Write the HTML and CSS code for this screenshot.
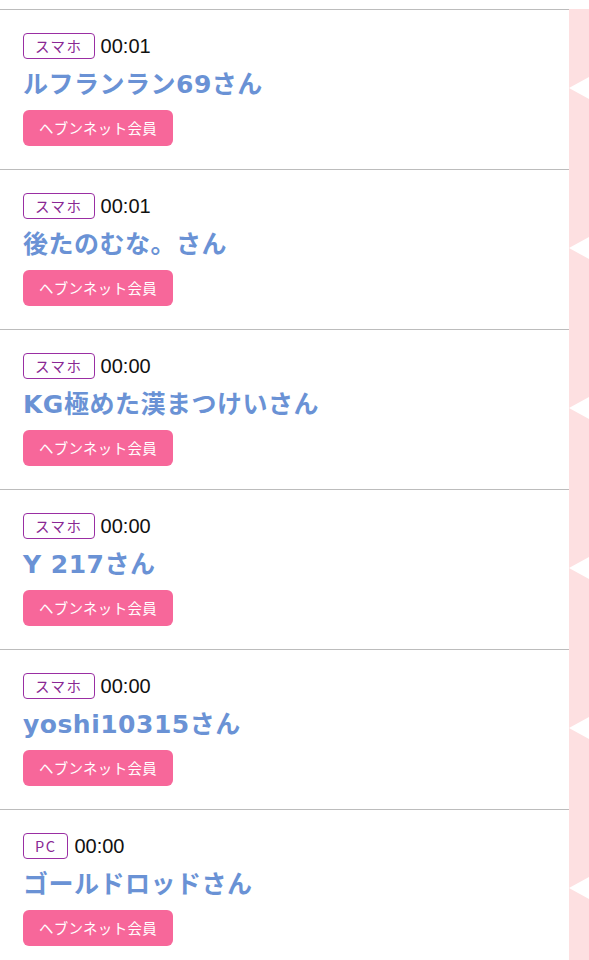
FILE: index.html
```html
<!DOCTYPE html>
<html lang="ja">
<head>
    <meta charset="UTF-8">
    <meta name="viewport" content="width=device-width, initial-scale=1.0">
    <title>足あと</title>
    <link rel="stylesheet" href="styles.css">
</head>
<body>
    <div class="list">
        <div class="row">
            <div class="item">
                <div class="meta"><span class="device">スマホ</span><span class="time">00:01</span></div>
                <p class="name">ルフランラン69さん</p>
                <span class="member">ヘブンネット会員</span>
            </div>
            <div class="tail"></div>
        </div>
        <div class="row">
            <div class="item">
                <div class="meta"><span class="device">スマホ</span><span class="time">00:01</span></div>
                <p class="name">後たのむな。さん</p>
                <span class="member">ヘブンネット会員</span>
            </div>
            <div class="tail"></div>
        </div>
        <div class="row">
            <div class="item">
                <div class="meta"><span class="device">スマホ</span><span class="time">00:00</span></div>
                <p class="name">KG極めた漢まつけいさん</p>
                <span class="member">ヘブンネット会員</span>
            </div>
            <div class="tail"></div>
        </div>
        <div class="row">
            <div class="item">
                <div class="meta"><span class="device">スマホ</span><span class="time">00:00</span></div>
                <p class="name">Y 217さん</p>
                <span class="member">ヘブンネット会員</span>
            </div>
            <div class="tail"></div>
        </div>
        <div class="row">
            <div class="item">
                <div class="meta"><span class="device">スマホ</span><span class="time">00:00</span></div>
                <p class="name">yoshi10315さん</p>
                <span class="member">ヘブンネット会員</span>
            </div>
            <div class="tail"></div>
        </div>
        <div class="row">
            <div class="item">
                <div class="meta"><span class="device">PC</span><span class="time">00:00</span></div>
                <p class="name">ゴールドロッドさん</p>
                <span class="member">ヘブンネット会員</span>
            </div>
            <div class="tail"></div>
        </div>
    </div>
</body>
</html>
```

FILE: styles.css
```css
body{margin:0;padding:9px 0 0;background:#fff;font-family:"Noto Sans CJK JP","Noto Sans",sans-serif;overflow:hidden}
.list{display:flex;flex-direction:column}
.row{display:flex;height:160px}
.item{flex:1;border-top:1px solid #bcbcbc;padding:23px 23px 0;display:flex;flex-direction:column;align-items:flex-start}
.meta{display:flex;align-items:center;height:26px}
.device{box-sizing:border-box;height:26px;padding:0 11px;border:1.5px solid #9a2ea3;border-radius:4px;color:#8a2894;font-size:14.5px;line-height:23px;letter-spacing:1.5px}
.time{margin-left:6px;font-family:"Liberation Sans",Arial,sans-serif;font-size:20px;color:#111}
.name{margin:8px 0;font-family:"DejaVu Sans","Noto Sans CJK JP",sans-serif;font-size:25px;line-height:35px;font-weight:600;letter-spacing:.5px;color:#6a92d5;white-space:nowrap}
.member{box-sizing:border-box;width:150px;height:36px;border-radius:6px;background:#f7679a;color:#fff;font-size:14.5px;line-height:36px;text-align:center;letter-spacing:.3px}
.tail{position:relative;width:20px;background:#fde0e1}
.tail::before{content:"";position:absolute;left:0;top:68px;border-style:solid;border-width:11px 20px 11px 0;border-color:transparent #fff transparent transparent}
```
